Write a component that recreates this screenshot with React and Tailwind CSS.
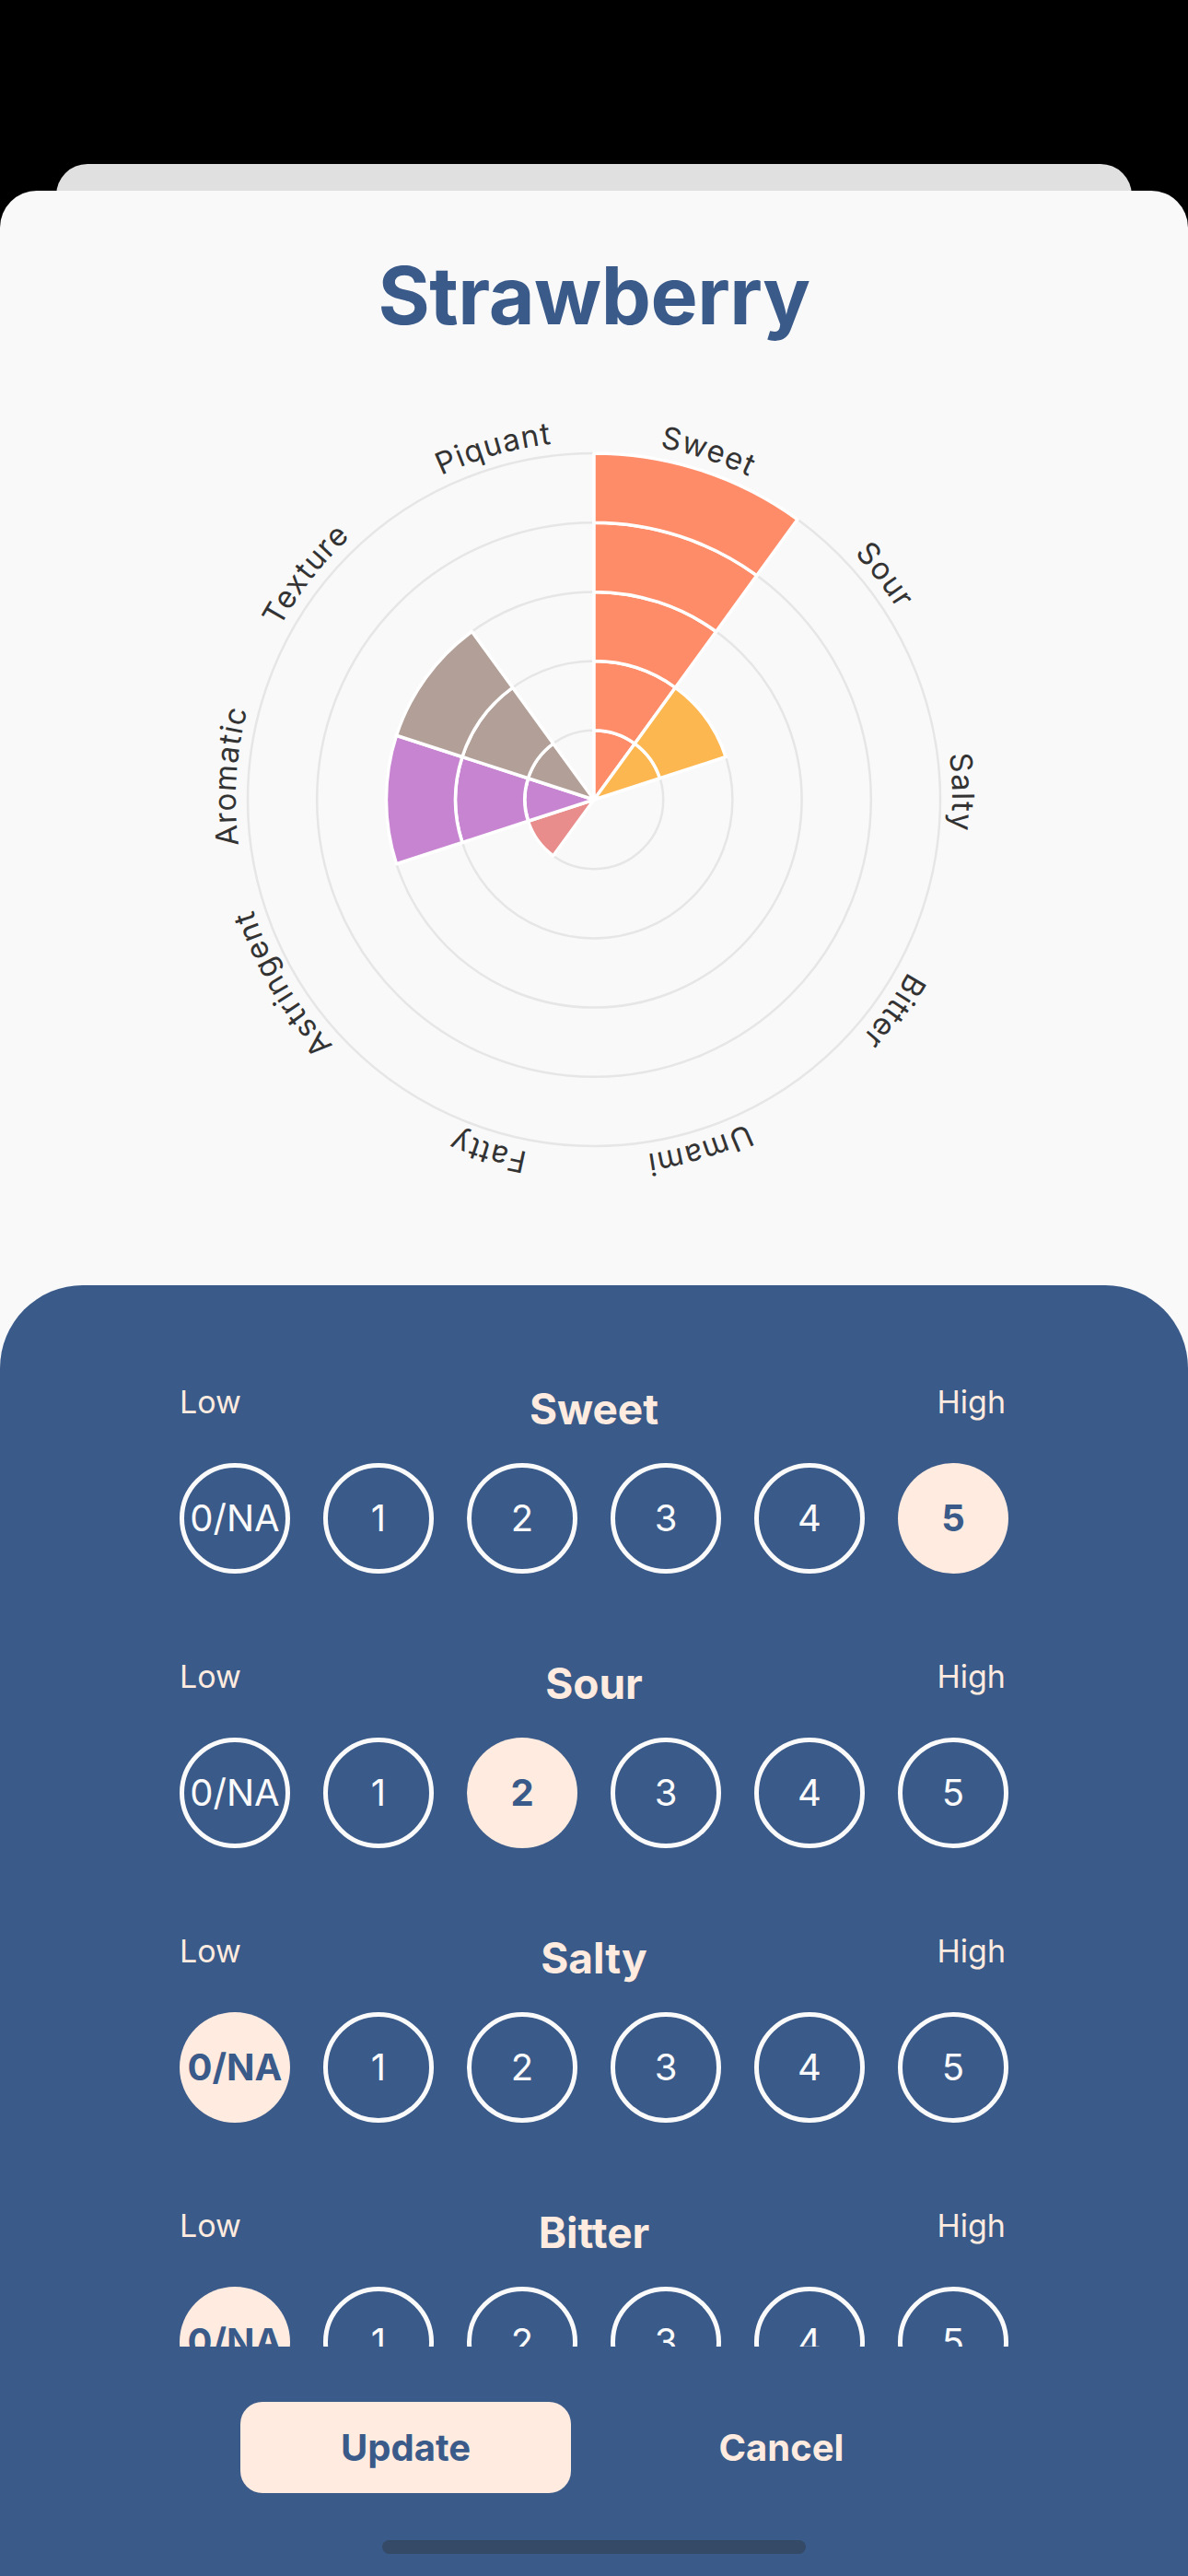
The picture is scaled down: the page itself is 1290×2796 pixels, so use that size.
import React from "react";

const CX = 450;
const CY = 450;
const STEP = 75.2;
const LABEL_R = 389;
const LABEL_START = 10.6;

const cats = [
  { name: "Sweet", value: 5, color: "#FF8C69" },
  { name: "Sour", value: 2, color: "#FDB750" },
  { name: "Salty", value: 0, color: "#9AD0EC" },
  { name: "Bitter", value: 0, color: "#8FBF8F" },
  { name: "Umami", value: 0, color: "#A0A0D0" },
  { name: "Fatty", value: 0, color: "#F0D060" },
  { name: "Astringent", value: 1, color: "#E88D8B" },
  { name: "Aromatic", value: 3, color: "#C785D1" },
  { name: "Texture", value: 3, color: "#B29F98" },
  { name: "Piquant", value: 0, color: "#E06060" },
];

function pt(r, deg) {
  const a = (deg * Math.PI) / 180;
  return [CX + r * Math.sin(a), CY - r * Math.cos(a)];
}

function sector(r0, r1, a0, a1) {
  const [x1, y1] = pt(r1, a0);
  const [x2, y2] = pt(r1, a1);
  if (r0 <= 0) {
    return `M ${CX} ${CY} L ${x1} ${y1} A ${r1} ${r1} 0 0 1 ${x2} ${y2} Z`;
  }
  const [x3, y3] = pt(r0, a1);
  const [x4, y4] = pt(r0, a0);
  return `M ${x4} ${y4} L ${x1} ${y1} A ${r1} ${r1} 0 0 1 ${x2} ${y2} L ${x3} ${y3} A ${r0} ${r0} 0 0 0 ${x4} ${y4} Z`;
}

function Chart() {
  const circ = 2 * Math.PI * LABEL_R;
  const labelPath = `M ${CX} ${CY - LABEL_R} A ${LABEL_R} ${LABEL_R} 0 1 1 ${CX} ${CY + LABEL_R} A ${LABEL_R} ${LABEL_R} 0 1 1 ${CX} ${CY - LABEL_R}`;
  return (
    <svg width="900" height="900" viewBox="0 0 900 900" className="block">
      <defs>
        <path id="labelCircle" d={labelPath} fill="none" />
      </defs>
      {[1, 2, 3, 4, 5].map((k) => (
        <circle
          key={k}
          cx={CX}
          cy={CY}
          r={k * STEP}
          fill="none"
          stroke="#E6E6E6"
          strokeWidth="2.5"
        />
      ))}
      {cats.map((c, i) => {
        const a0 = i * 36;
        const a1 = a0 + 36;
        const segs = [];
        for (let k = 1; k <= c.value; k++) {
          segs.push(
            <path
              key={`${i}-${k}`}
              d={sector((k - 1) * STEP, k * STEP, a0, a1)}
              fill={c.color}
              stroke="#FFFFFF"
              strokeWidth="3.5"
              strokeLinejoin="round"
            />
          );
        }
        return <g key={c.name}>{segs}</g>;
      })}
      {cats.map((c, i) => (
        <text
          key={c.name}
          fontFamily="Inter, sans-serif"
          fontSize="33"
          letterSpacing="1.2"
          fill="#333333"
        >
          <textPath
            href="#labelCircle"
            startOffset={((i * 36 + LABEL_START) / 360) * circ}
            textAnchor="start"
          >
            {c.name}
          </textPath>
        </text>
      ))}
    </svg>
  );
}

const rows = [
  { name: "Sweet", sel: 5 },
  { name: "Sour", sel: 2 },
  { name: "Salty", sel: 0 },
  { name: "Bitter", sel: 0 },
  { name: "Umami", sel: 0 },
  { name: "Fatty", sel: 0 },
];

const opts = ["0/NA", "1", "2", "3", "4", "5"];

function Row({ name, sel }) {
  return (
    <div className="flex flex-col pb-[91px]">
      <div className="flex items-start justify-between h-[56px]">
        <span className="text-[34px] leading-[42px] text-[#FFEBDF] w-[100px]">Low</span>
        <span className="text-[46px] leading-[56px] font-bold text-[#FFEBDF]">{name}</span>
        <span className="text-[34px] leading-[42px] text-[#FFEBDF] w-[100px] text-right pr-[3px]">High</span>
      </div>
      <div className="mt-[31px] flex gap-[36px]">
        {opts.map((o, i) =>
          i === sel ? (
            <div
              key={o}
              className="w-[120px] h-[120px] rounded-full bg-[#FFEBDF] flex items-center justify-center text-[40px] font-bold text-[#3A5A8A] leading-[50px]"
            >
              {o}
            </div>
          ) : (
            <div
              key={o}
              className="w-[120px] h-[120px] rounded-full border-[5px] border-[#FAFAFA] flex items-center justify-center text-[40px] text-[#FAFAFA] leading-[50px]"
            >
              {o}
            </div>
          )
        )}
      </div>
    </div>
  );
}

export default function App() {
  return (
    <div className="w-[1290px] h-[2796px] bg-black flex flex-col overflow-hidden font-[Inter,sans-serif]">
      <div className="h-[178px] shrink-0" />
      <div className="mx-[61px] h-[60px] shrink-0 rounded-t-[34px] bg-[#E0E0E0] -mb-[31px]" />
      <div className="relative flex-1 flex flex-col rounded-t-[40px] bg-[#F9F9F9]">
        <h1 className="pt-[62px] text-center text-[86px] leading-[104px] font-bold text-[#3A5A8A] tracking-[-0.5px]">
          Strawberry
        </h1>
        <div className="mt-[45px] flex justify-center">
          <Chart />
        </div>
        <div className="mt-[77px] flex-1 flex flex-col bg-[#3A5A8A] rounded-t-[90px]">
          <div className="mt-[106px] h-[1046px] overflow-hidden px-[195px]">
            {rows.map((r) => (
              <Row key={r.name} {...r} />
            ))}
          </div>
          <div className="mt-[60px] flex pl-[261px] gap-[49px]">
            <button className="w-[359px] h-[99px] rounded-[24px] bg-[#FFEBDF] text-[#3A5A8A] text-[40px] leading-[50px] font-bold">
              Update
            </button>
            <button className="w-[359px] h-[99px] text-[#FFEBDF] text-[40px] leading-[50px] font-bold">
              Cancel
            </button>
          </div>
          <div className="mt-[51px] flex justify-center">
            <div className="w-[460px] h-[15px] rounded-full bg-[#354A66]" />
          </div>
        </div>
      </div>
    </div>
  );
}
